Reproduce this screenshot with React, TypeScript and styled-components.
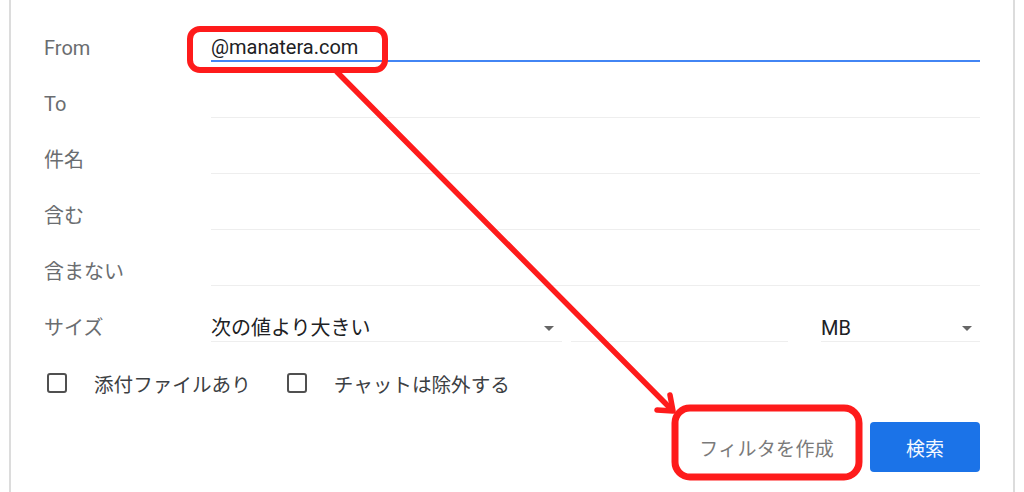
import React from 'react';
import styled, { createGlobalStyle } from 'styled-components';

const GlobalStyle = createGlobalStyle`
  html, body {
    margin: 0;
    padding: 0;
    background: #ffffff;
  }
  body {
    font-family: Roboto, "Noto Sans CJK JP", "Noto Sans", sans-serif;
  }
`;

const Page = styled.div`
  position: relative;
  width: 1024px;
  height: 492px;
  overflow: hidden;
  background: #ffffff;
`;

const Panel = styled.div`
  box-sizing: border-box;
  margin-left: 9px;
  width: 1006px;
  height: 492px;
  padding: 6px 33px 0;
  border-left: 2px solid #dcdcdc;
  border-right: 2px solid #dcdcdc;
`;

const FieldRow = styled.div`
  display: grid;
  grid-template-columns: 167px 1fr;
  align-items: end;
  height: 56px;
`;

const Label = styled.div`
  height: 28px;
  line-height: 28px;
  font-size: 20px;
  color: #6a6d70;
  white-space: nowrap;
`;

const TextField = styled.div<{ $active?: boolean; $width?: number; $offset?: number }>`
  box-sizing: border-box;
  height: 28px;
  line-height: 26px;
  font-size: 20px;
  color: #202124;
  white-space: nowrap;
  width: ${(p) => (p.$width ? `${p.$width}px` : 'auto')};
  margin-left: ${(p) => p.$offset || 0}px;
  border-bottom: ${(p) => (p.$active ? '2px solid #4285f4' : '1px solid #eeeeee')};
`;

const SizeControls = styled.div`
  display: flex;
  align-items: flex-end;
`;

const Select = styled(TextField)`
  display: flex;
  justify-content: space-between;
  align-items: center;
  padding-right: 8px;
`;

const Caret = styled.span`
  width: 0;
  height: 0;
  border-left: 5px solid transparent;
  border-right: 5px solid transparent;
  border-top: 5px solid #666666;
  margin-top: 2px;
`;

const CheckRow = styled.div`
  display: flex;
  align-items: center;
  margin-top: 31px;
  height: 20px;
`;

const CheckItem = styled.label<{ $gap: number }>`
  display: flex;
  align-items: center;
  margin-left: ${(p) => p.$gap}px;
  font-size: 19.6px;
  color: #3c4043;
  white-space: nowrap;
`;

const Box = styled.span`
  box-sizing: border-box;
  width: 20px;
  height: 20px;
  border: 2.5px solid #505050;
  border-radius: 3px;
  margin-right: 27px;
`;

const ButtonRow = styled.div`
  display: flex;
  justify-content: flex-end;
  align-items: center;
  gap: 20px;
  margin-top: 29px;
`;

const TextButton = styled.button`
  height: 50px;
  padding: 0 16px;
  border: none;
  background: transparent;
  font-family: inherit;
  font-size: 19px;
  color: #7a7a7a;
  letter-spacing: 0.3px;
`;

const PrimaryButton = styled.button`
  width: 110px;
  height: 50px;
  border: none;
  border-radius: 4px;
  background: #1b73e8;
  font-family: inherit;
  font-size: 19px;
  color: #f4f8ff;
`;

const Overlay = styled.svg`
  position: absolute;
  left: 0;
  top: 0;
  pointer-events: none;
`;

const textRows = [
  { label: 'From', value: '@manatera.com', active: true },
  { label: 'To', value: '' },
  { label: '件名', value: '' },
  { label: '含む', value: '' },
  { label: '含まない', value: '' },
];

export default function App() {
  return (
    <Page>
      <GlobalStyle />
      <Panel>
        {textRows.map((r) => (
          <FieldRow key={r.label}>
            <Label>{r.label}</Label>
            <TextField $active={r.active}>{r.value}</TextField>
          </FieldRow>
        ))}
        <FieldRow>
          <Label>サイズ</Label>
          <SizeControls>
            <Select $width={351}>
              次の値より大きい
              <Caret />
            </Select>
            <TextField $width={217} $offset={9} />
            <Select $width={159} $offset={33}>
              MB
              <Caret />
            </Select>
          </SizeControls>
        </FieldRow>
        <CheckRow>
          <CheckItem $gap={3}>
            <Box />
            添付ファイルあり
          </CheckItem>
          <CheckItem $gap={36}>
            <Box />
            チャットは除外する
          </CheckItem>
        </CheckRow>
        <ButtonRow>
          <TextButton>フィルタを作成</TextButton>
          <PrimaryButton>検索</PrimaryButton>
        </ButtonRow>
      </Panel>

      {/* red annotation drawn on top of the form */}
      <Overlay width={1024} height={492} viewBox="0 0 1024 492">
        <g fill="none" stroke="#fe1b1b" strokeLinecap="round" strokeLinejoin="round">
          <rect x={190} y={29} width={195} height={41} rx={10} strokeWidth={6} />
          <line x1={337} y1={72} x2={672} y2={410} strokeWidth={5.5} />
          <polyline points="670,395 673,411 657,410" strokeWidth={5.5} />
          <rect x={675} y={408} width={184} height={69} rx={15} strokeWidth={7} />
        </g>
      </Overlay>
    </Page>
  );
}
